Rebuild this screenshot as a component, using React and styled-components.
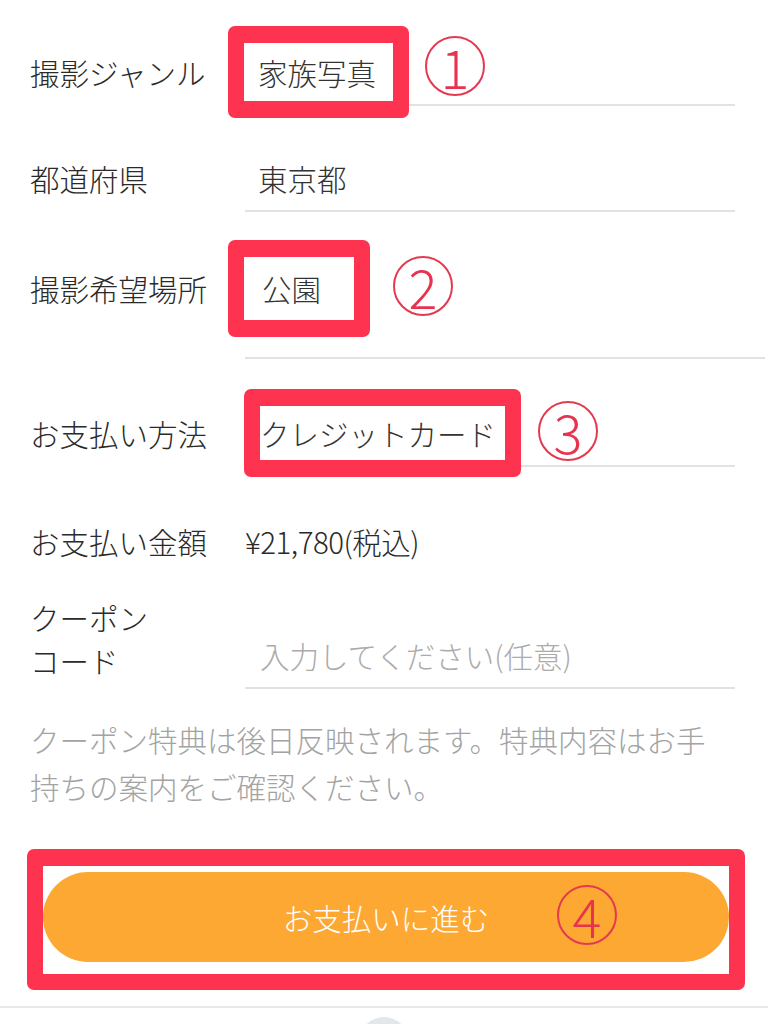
import React from "react";
import styled, { createGlobalStyle } from "styled-components";

const GlobalStyle = createGlobalStyle`
  body {
    margin: 0;
    background: #ffffff;
    font-family: "Noto Sans CJK JP", "Noto Sans", sans-serif;
    color: #2b2b2b;
  }
`;

const Page = styled.main`
  width: 768px;
  height: 1024px;
  overflow: hidden;
  background: #ffffff;
`;

const Form = styled.section`
  padding: 40px 0 0 30px;
  display: flex;
  flex-direction: column;
`;

const Row = styled.div`
  display: flex;
  align-items: flex-start;
  margin-top: ${(p) => p.$mt || 0}px;
`;

const Label = styled.div`
  width: 215px;
  flex-shrink: 0;
  height: 64px;
  display: flex;
  align-items: center;
  font-size: 29.5px;
  font-weight: 300;
  color: #2a2a2a;
  white-space: nowrap;
`;

const MultiLabel = styled.div`
  width: 215px;
  flex-shrink: 0;
  font-size: 29.5px;
  font-weight: 300;
  line-height: 43px;
  color: #2a2a2a;
`;

const Field = styled.div`
  width: ${(p) => p.$w || 490}px;
  height: 64px;
  margin-top: ${(p) => p.$mt || 0}px;
  padding-bottom: ${(p) => p.$pb || 0}px;
  border-bottom: ${(p) => (p.$line ? "2px solid #e2e2e2" : "none")};
  display: flex;
  align-items: ${(p) => (p.$top ? "flex-start" : "center")};
  font-size: 29.5px;
  font-weight: 300;
  color: #333333;
  white-space: nowrap;
`;

const FieldBody = styled.div`
  height: 64px;
  display: flex;
  align-items: center;
`;

const Value = styled.span`
  padding-left: ${(p) => p.$pl ?? 13}px;
  color: ${(p) => (p.$muted ? "#ababab" : "#333333")};
`;

const Price = styled.span`
  font-size: 29.5px;
  font-weight: 300;
  color: #2a2a2a;
  letter-spacing: -0.5px;
`;

const Annotated = styled.span`
  flex-shrink: 0;
  display: inline-flex;
  align-items: center;
  height: ${(p) => p.$h}px;
  margin-left: ${(p) => p.$ml}px;
  padding: 0 ${(p) => p.$pr}px 0 ${(p) => p.$pl}px;
  border: 16px solid #fe3350;
  border-width: 17px 16px;
  border-radius: 7px;
  background: #ffffff;
  position: relative;
`;

const Marker = styled.span`
  flex-shrink: 0;
  width: 56px;
  height: 56px;
  margin-left: ${(p) => p.$ml || 16}px;
  margin-top: ${(p) => p.$dy || 0}px;
  border: 2px solid #e33a50;
  border-radius: 50%;
  display: inline-flex;
  align-items: center;
  justify-content: center;
  color: #e8334f;
  font-family: "Noto Sans CJK JP", "Noto Sans", sans-serif;
  font-weight: 300;
  font-size: 54px;
  line-height: 1;
  position: relative;
`;

const ButtonMarker = styled(Marker)`
  position: absolute;
  left: 514px;
  top: 13px;
  margin: 0;
`;

const Note = styled.p`
  margin: 27px 0 0 0;
  max-width: 700px;
  font-size: 29.5px;
  font-weight: 300;
  line-height: 47px;
  color: #a3a3a3;
`;

const ActionArea = styled.div`
  padding: 0 23px 0 27px;
  margin-top: 39px;
`;

const ActionFrame = styled.div`
  border: 16px solid #fe3350;
  border-width: 17px 16px 16px 16px;
  border-radius: 7px;
  padding: 6px 0 12px 0;
  background: #ffffff;
`;

const PayButton = styled.button`
  width: 100%;
  height: 90px;
  border: none;
  border-radius: 45px;
  background: #fda833;
  display: flex;
  align-items: center;
  justify-content: center;
  padding: 0;
  font-family: "Noto Sans CJK JP", "Noto Sans", sans-serif;
  font-size: 29.5px;
  font-weight: 300;
  color: #ffffff;
  cursor: pointer;
  position: relative;
`;

const BottomBar = styled.nav`
  margin-top: 16px;
  border-top: 2px solid #e8e8e8;
  display: flex;
  justify-content: center;
  padding-top: 9px;
`;

const NavDot = styled.span`
  width: 50px;
  height: 50px;
  border-radius: 50%;
  background: #e3e7eb;
`;

const App = () => {
  return (
    <>
      <GlobalStyle />
      <Page>
        <Form>
          <Row>
            <Label>撮影ジャンル</Label>
            <Field $line>
              <Annotated $ml={-17} $pl={14} $pr={17} $h={58}>家族写真</Annotated>
              <Marker $dy={-12}>1</Marker>
            </Field>
          </Row>

          <Row $mt={40}>
            <Label>都道府県</Label>
            <Field $line>
              <Value>東京都</Value>
            </Field>
          </Row>

          <Row $mt={44}>
            <Label>撮影希望場所</Label>
            <Field $line $top $w={520} $pb={37}>
              <FieldBody>
                <Annotated $ml={-17} $pl={18} $pr={33} $h={63}>公園</Annotated>
                <Marker $ml={23} $dy={-4}>2</Marker>
              </FieldBody>
            </Field>
          </Row>

          <Row $mt={42}>
            <Label>お支払い方法</Label>
            <Field $line>
              <Annotated $ml={-1} $pl={0} $pr={9} $h={54}>クレジットカード</Annotated>
              <Marker $ml={17} $dy={-4}>3</Marker>
            </Field>
          </Row>

          <Row $mt={42}>
            <Label>お支払い金額</Label>
            <Field>
              <Price>¥21,780(税込)</Price>
            </Field>
          </Row>

          <Row $mt={23}>
            <MultiLabel>
              クーポン
              <br />
              コード
            </MultiLabel>
            <Field $line $mt={27}>
              <Value $pl={15} $muted>入力してください(任意)</Value>
            </Field>
          </Row>

          <Note>
            クーポン特典は後日反映されます。特典内容はお手持ちの案内をご確認ください。
          </Note>
        </Form>

        <ActionArea>
          <ActionFrame>
            <PayButton type="button">
              お支払いに進む
              <ButtonMarker>4</ButtonMarker>
            </PayButton>
          </ActionFrame>
        </ActionArea>

        <BottomBar>
          <NavDot />
        </BottomBar>
      </Page>
    </>
  );
};

export default App;
